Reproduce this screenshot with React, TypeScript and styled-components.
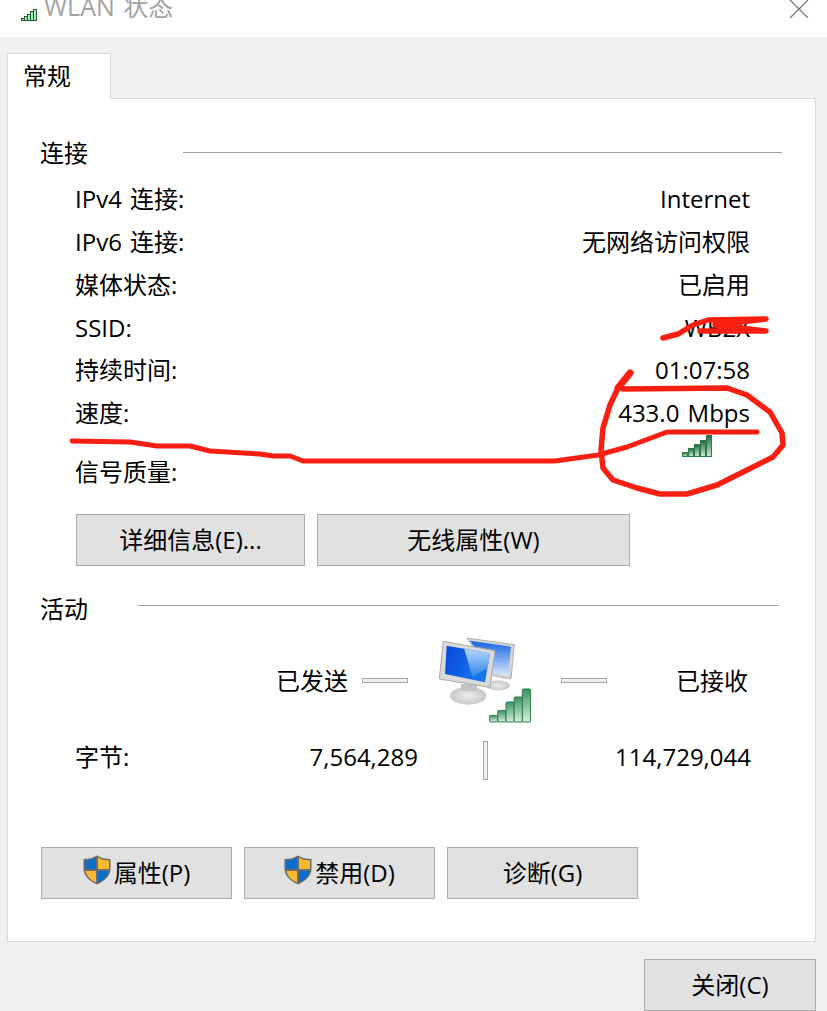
import React from "react";
import styled, { createGlobalStyle } from "styled-components";

const GlobalStyle = createGlobalStyle`
    html, body {
        margin: 0;
        width: 827px;
        height: 1011px;
        overflow: hidden;
        background: #f0f0f0;
    }
    * {
        box-sizing: border-box;
    }
`;

const Main = styled.div`
    position: relative;
    width: 827px;
    height: 1011px;
    overflow: hidden;
    font-family: "Open Sans", "Noto Sans CJK SC", sans-serif;
    font-size: 24px;
    word-spacing: 2px;
    color: #000;
`;

const TitleBar = styled.div`
    display: flex;
    height: 37px;
    padding-left: 21px;
    background: #fff;
`;

const TitleIcon = styled.svg`
    width: 16px;
    height: 13px;
    margin-top: 8px;
`;

const Title = styled.div`
    margin-left: 7px;
    font-size: 25px;
    line-height: 13px;
    color: #a3a3a3;
`;

const CloseIcon = styled.svg`
    margin-left: auto;
    margin-right: 18px;
    width: 20px;
    height: 18px;
`;

const Tabs = styled.div`
    display: flex;
    padding: 16px 0 0 7px;
`;

const Tab = styled.div`
    position: relative;
    z-index: 1;
    width: 104px;
    height: 46px;
    margin-bottom: -1px;
    padding-left: 15px;
    line-height: 43px;
    background: #fff;
    border: 1px solid #d9d9d9;
    border-bottom: none;
`;

const Panel = styled.div`
    width: 809px;
    height: 844px;
    margin-left: 7px;
    background: #fff;
    border: 1px solid #d9d9d9;
`;

const SectionHead = styled.div<{ $top: number; $gap: number; $end: number; $lineY: number }>`
    display: flex;
    align-items: center;
    height: 36px;
    margin-top: ${(p) => p.$top}px;
    padding: 0 ${(p) => p.$end}px 4px 32px;

    &::after {
        content: "";
        flex: 1;
        height: 1px;
        margin-left: ${(p) => p.$gap}px;
        transform: translateY(${(p) => p.$lineY}px);
        background: #a0a0a0;
    }
`;

const InfoGrid = styled.div`
    display: grid;
    grid-template-columns: 1fr auto;
    grid-template-rows: repeat(6, 42.8px) 58px;
    margin-top: 7.2px;
    padding: 0 65px 0 67px;
    line-height: 42.8px;
`;

const InfoValue = styled.div`
    text-align: right;
`;

const SignalLabel = styled.div`
    line-height: 74px;
`;

const SignalValue = styled.svg`
    display: block;
    justify-self: end;
    width: 30px;
    height: 22px;
    margin-right: 38px;
`;

const ButtonRow = styled.div<{ $top: number; $left: number }>`
    display: flex;
    gap: 12px;
    margin-top: ${(p) => p.$top}px;
    padding-left: ${(p) => p.$left}px;
`;

const Button = styled.div<{ $width: number }>`
    display: flex;
    align-items: center;
    justify-content: center;
    width: ${(p) => p.$width}px;
    height: 52px;
    padding-bottom: 3px;
    background: #e1e1e1;
    border: 1px solid #adadad;
`;

const ShieldIcon = styled.svg`
    flex: none;
    width: 28px;
    height: 30px;
    margin-top: -2px;
    margin-right: 3px;
`;

const TrafficRow = styled.div`
    display: grid;
    grid-template-columns: 340px 60px 124px 75px 141px;
    align-items: center;
    margin-top: 9px;
`;

const TrafficLabel = styled.div`
    padding-bottom: 2px;
    text-align: right;
`;

const Dash = styled.div<{ $left: number }>`
    width: 46px;
    height: 5px;
    margin-left: ${(p) => p.$left}px;
    background: #f0f0f0;
    border: 1px solid #a6a6a6;
`;

const NetworkIcon = styled.svg`
    display: block;
    width: 94px;
    height: 87px;
    margin-left: 30px;
`;

const BytesRow = styled.div`
    display: grid;
    grid-template-columns: 100px 243px 70px 1fr;
    height: 39px;
    margin-top: 17px;
    padding: 0 64px 0 67px;
    line-height: 32px;
`;

const BytesValue = styled.div`
    text-align: right;
`;

const BytesRule = styled.div`
    justify-self: end;
    width: 5px;
    height: 39px;
    background: #f0f0f0;
    border: 1px solid #a6a6a6;
`;

const Footer = styled.div`
    display: flex;
    justify-content: flex-end;
    padding: 17px 11px 0 0;
`;

const Scribble = styled.svg`
    position: absolute;
    top: 0;
    left: 0;
    width: 827px;
    height: 1011px;
    pointer-events: none;
`;

const infoRows = [
    ["IPv4 连接:", "Internet"],
    ["IPv6 连接:", "无网络访问权限"],
    ["媒体状态:", "已启用"],
    ["SSID:", "WB2X"],
    ["持续时间:", "01:07:58"],
    ["速度:", "433.0 Mbps"],
];

function Shield() {
    return (
        <ShieldIcon viewBox="0 0 28 30">
            <path d="M14 0.5C10 3 6 4 0.5 4V14C0.5 21 7 26.5 14 29.5C21 26.5 27.5 21 27.5 14V4C22 4 18 3 14 0.5Z" fill="#6b6b6b" />
            <path d="M13 2.5C10 4.3 6.5 5.4 2 5.6V14H13Z" fill="#0b6fca" />
            <path d="M15 2.5C18 4.3 21.5 5.4 26 5.6V14H15Z" fill="#fbb930" />
            <path d="M2.3 16C3.4 21 7.6 25 13 27.6V16Z" fill="#fbb930" />
            <path d="M25.7 16C24.6 21 20.4 25 15 27.6V16Z" fill="#0b6fca" />
        </ShieldIcon>
    );
}

// bars are drawn bottom aligned, each one a bit taller than the last
function Bars(props: { x: number; bottom: number; width: number; step: number; heights: number[]; fill: string; stroke: string; radius?: number }) {
    return (
        <>
            {props.heights.map((h, i) => (
                <rect
                    key={i}
                    x={props.x + i * props.step}
                    y={props.bottom - h}
                    width={props.width}
                    height={h}
                    rx={props.radius}
                    fill={props.fill}
                    stroke={props.stroke}
                    strokeWidth={1}
                />
            ))}
        </>
    );
}

export default function App() {
    return (
        <Main>
            <GlobalStyle />
            <TitleBar>
                <TitleIcon viewBox="0 0 16 13">
                    <Bars x={0.5} bottom={12.5} width={3} step={3} heights={[2, 4, 6, 9, 11]} fill="#a9e8b4" stroke="#1d5c33" />
                </TitleIcon>
                <Title>WLAN 状态</Title>
                <CloseIcon viewBox="0 0 20 18">
                    <path d="M1 0L19 18M19 0L1 18" stroke="#777" strokeWidth={1.3} fill="none" />
                </CloseIcon>
            </TitleBar>
            <Tabs>
                <Tab>常规</Tab>
            </Tabs>
            <Panel>
                <SectionHead $top={36} $gap={95} $end={33} $lineY={1}>
                    连接
                </SectionHead>
                <InfoGrid>
                    {infoRows.map(([label, value]) => (
                        <React.Fragment key={label}>
                            <div>{label}</div>
                            <InfoValue>{value}</InfoValue>
                        </React.Fragment>
                    ))}
                    <SignalLabel>信号质量:</SignalLabel>
                    <SignalValue viewBox="0 0 30 22">
                        <defs>
                            <linearGradient id="smallBar" x1="0" y1="0" x2="0" y2="1">
                                <stop offset="0" stopColor="#1f6b3d" />
                                <stop offset="1" stopColor="#c9ecd2" />
                            </linearGradient>
                        </defs>
                        <Bars x={0.5} bottom={21.5} width={5} step={6} heights={[4, 8, 12, 16, 21]} fill="url(#smallBar)" stroke="#2f7a4c" />
                    </SignalValue>
                </InfoGrid>
                <ButtonRow $top={21} $left={68}>
                    <Button $width={229}>详细信息(E)...</Button>
                    <Button $width={313}>无线属性(W)</Button>
                </ButtonRow>
                <SectionHead $top={26} $gap={50} $end={36} $lineY={-2}>
                    活动
                </SectionHead>
                <TrafficRow>
                    <TrafficLabel>已发送</TrafficLabel>
                    <Dash $left={14} />
                    <NetworkIcon viewBox="0 0 94 87">
                        <defs>
                            <linearGradient id="frontScreen" x1="0" y1="0" x2="1" y2="0.4">
                                <stop offset="0" stopColor="#0a46dc" />
                                <stop offset="1" stopColor="#1678ee" />
                            </linearGradient>
                            <linearGradient id="frontShine" x1="0" y1="0" x2="0" y2="1">
                                <stop offset="0" stopColor="#b5d6f9" />
                                <stop offset="1" stopColor="#2a82ec" />
                            </linearGradient>
                            <linearGradient id="backScreen" x1="0" y1="0" x2="0" y2="1">
                                <stop offset="0" stopColor="#1463e4" />
                                <stop offset="1" stopColor="#d5e8fb" />
                            </linearGradient>
                            <linearGradient id="bigBar" x1="0" y1="0" x2="0" y2="1">
                                <stop offset="0" stopColor="#3a9360" />
                                <stop offset="1" stopColor="#d6f2dd" />
                            </linearGradient>
                            <radialGradient id="foot">
                                <stop offset="0" stopColor="#ececec" />
                                <stop offset="1" stopColor="#c8c8c8" />
                            </radialGradient>
                        </defs>
                        <ellipse cx="60" cy="48.5" rx="12" ry="5" fill="url(#foot)" />
                        <path d="M28.7 1L76.3 7.7L73 42L55.3 38.7Z" fill="#d6d6d6" stroke="#b0b0b0" />
                        <path d="M32 3.7L73 9.7L70.3 38.7L55 36.3Z" fill="url(#backScreen)" />
                        <ellipse cx="30.3" cy="58.7" rx="18" ry="9" fill="url(#foot)" />
                        <rect x="23" y="47" width="16" height="7" fill="#c4c4c4" />
                        <path d="M5.3 4.3L57 13.7L52 50.3L1.3 42Z" fill="#dadada" stroke="#a9a9a9" />
                        <path d="M8.7 8.7L52 16.3L47 45.3L7 37Z" fill="url(#frontScreen)" />
                        <path d="M26.3 12L52 16.3L49.7 31L34.3 40.3Z" fill="url(#frontShine)" />
                        <Bars x={51.6} bottom={85} width={8.2} step={8.2} heights={[6.6, 11.6, 20, 25, 33]} radius={1} fill="url(#bigBar)" stroke="#2f7a4f" />
                    </NetworkIcon>
                    <Dash $left={29} />
                    <TrafficLabel>已接收</TrafficLabel>
                </TrafficRow>
                <BytesRow>
                    <div>字节:</div>
                    <BytesValue>7,564,289</BytesValue>
                    <BytesRule />
                    <BytesValue>114,729,044</BytesValue>
                </BytesRow>
                <ButtonRow $top={67} $left={33}>
                    <Button $width={191}>
                        <Shield />
                        属性(P)
                    </Button>
                    <Button $width={191}>
                        <Shield />
                        禁用(D)
                    </Button>
                    <Button $width={191}>诊断(G)</Button>
                </ButtonRow>
            </Panel>
            <Footer>
                <Button $width={172}>关闭(C)</Button>
            </Footer>
            <Scribble viewBox="0 0 827 1011" fill="none" stroke="#fb1f12" strokeWidth={5.5} strokeLinecap="round" strokeLinejoin="round">
                <path d="M663 338L678 334L693 325L708 320L766 319L715 325L766 331L700 331" />
                <path d="M630 373L618 388L610 405L603 428L601 450L603 468L613 480L637 488L660 494L687 494L717 485L747 470L773 457L783 445L782 433L770 412L747 395L727 388L623 389" />
                <path d="M618 388L630 373" strokeWidth={7} />
                <path
                    d="M72 441L130 442L157 446L190 446L210 451L260 454L273 456L290 456L303 461L555 461L598 455L627 447L667 432L757 432"
                    strokeWidth={5}
                />
            </Scribble>
        </Main>
    );
}
